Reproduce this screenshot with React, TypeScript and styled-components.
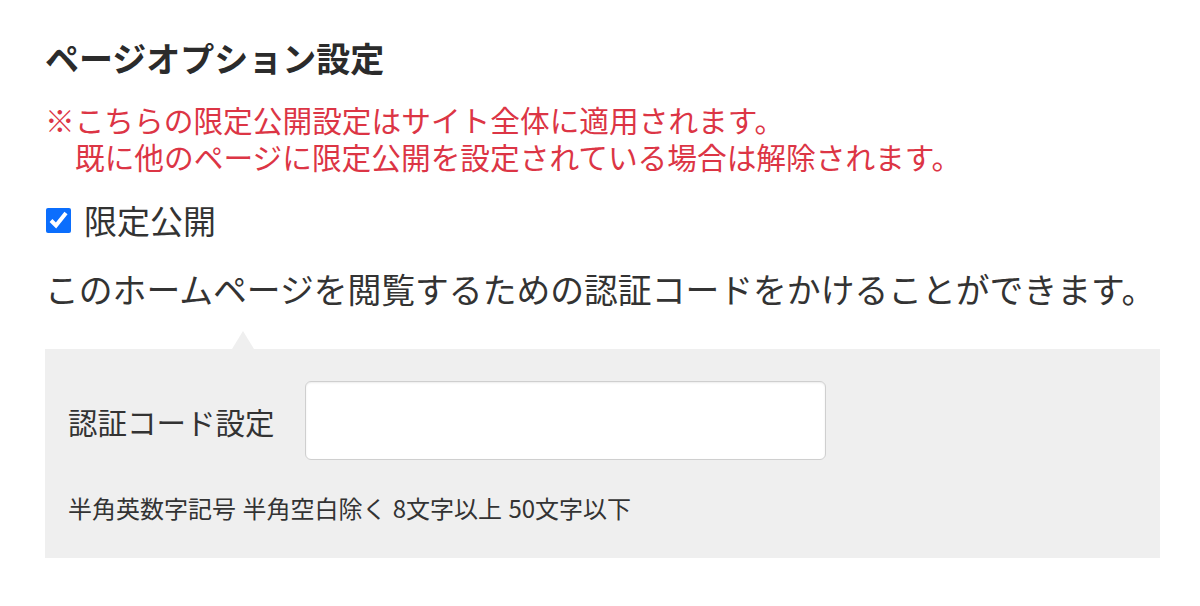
import React from "react";
import styled, { createGlobalStyle } from "styled-components";

const GlobalStyle = createGlobalStyle`
  body {
    margin: 0;
    background: #fff;
    font-family: "Noto Sans CJK JP", "Noto Sans", sans-serif;
    color: #333;
  }
`;

const Page = styled.div`
  padding: 33px 40px 0 45px;
`;

const Heading = styled.h2`
  margin: 0;
  font-size: 34px;
  line-height: 50px;
  font-weight: 700;
  color: #2b2b2b;
`;

const Notice = styled.p`
  margin: 18px 0 0;
  font-size: 29.7px;
  line-height: 37px;
  color: #dc3545;
  padding-left: 30px;
  text-indent: -30px;
`;

const CheckRow = styled.label`
  display: flex;
  align-items: center;
  gap: 13px;
  margin-top: 21px;
  font-size: 33px;
  line-height: 48px;
`;

const Check = styled.input`
  width: 25px;
  height: 25px;
  margin: 0 0 0 1px;
  accent-color: #0b6efd;
`;

const Description = styled.p`
  margin: 20px 0 0;
  font-size: 33.8px;
  line-height: 50px;
`;

const Panel = styled.div`
  position: relative;
  margin-top: 35px;
  background: #efefef;
  padding: 32px 23px 33px;

  &::before {
    content: "";
    position: absolute;
    top: -18px;
    left: 187px;
    border-left: 11px solid transparent;
    border-right: 11px solid transparent;
    border-bottom: 18px solid #efefef;
  }
`;

const FieldRow = styled.div`
  display: flex;
  align-items: center;
`;

const FieldLabel = styled.span`
  width: 237px;
  font-size: 29.5px;
  line-height: 40px;
`;

const TextBox = styled.input`
  box-sizing: border-box;
  width: 521px;
  height: 79px;
  border: 1px solid #cfcfcf;
  border-radius: 6px;
  background: #fff;
  box-shadow: inset 0 1px 2px rgba(0, 0, 0, 0.08);
  font-size: 24px;
  padding: 0 14px;
  outline: none;
`;

const Hint = styled.p`
  margin: 31px 0 0;
  font-size: 24px;
  line-height: 34px;
  word-spacing: 1px;
`;

export default function App() {
  return (
    <>
      <GlobalStyle />
      <Page>
        <Heading>ページオプション設定</Heading>
        <Notice>
          ※こちらの限定公開設定はサイト全体に適用されます。
          <br />
          既に他のページに限定公開を設定されている場合は解除されます。
        </Notice>
        <CheckRow>
          <Check type="checkbox" defaultChecked />
          限定公開
        </CheckRow>
        <Description>
          このホームページを閲覧するための認証コードをかけることができます。
        </Description>
        <Panel>
          <FieldRow>
            <FieldLabel>認証コード設定</FieldLabel>
            <TextBox type="text" />
          </FieldRow>
          <Hint>半角英数字記号 半角空白除く 8文字以上 50文字以下</Hint>
        </Panel>
      </Page>
    </>
  );
}
